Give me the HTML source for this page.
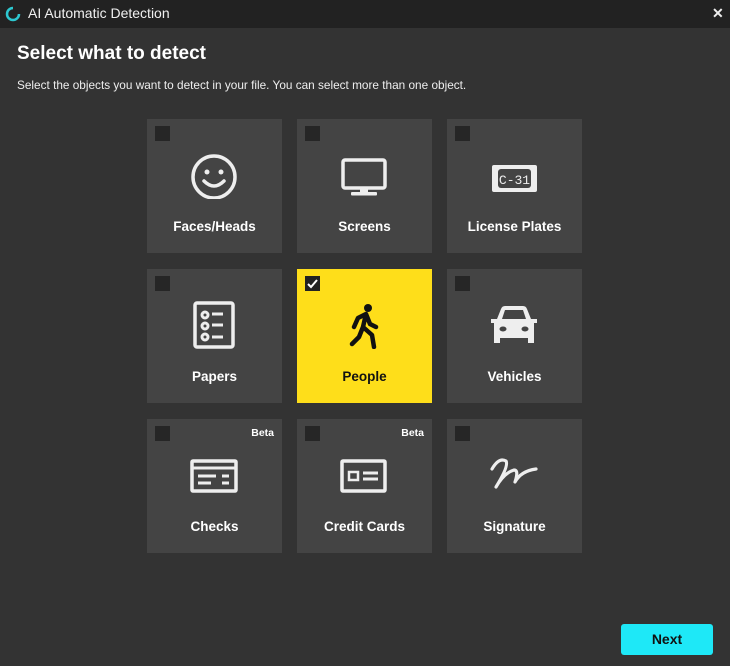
<!DOCTYPE html>
<html><head><style>
*{margin:0;padding:0;box-sizing:border-box}
body{width:730px;height:666px;background:#333333;font-family:"Liberation Sans",sans-serif;position:relative;overflow:hidden;color:#fff}
.bar{position:absolute;left:0;top:0;width:730px;height:28px;background:#222222}
.bar .t{position:absolute;left:28px;top:5px;font-size:14px;color:#f0f0f0}
.bar .x{position:absolute;left:712px;top:5px;font-size:14px;font-weight:bold;color:#eee}
h1{position:absolute;left:17px;top:43px;font-size:19px;font-weight:bold}
.sub{position:absolute;left:17px;top:78px;font-size:11.8px;color:#eee}
.tile{position:absolute;width:135px;height:134px;background:#444444}
.tile.sel{background:#fede1a;color:#111}
.cb{position:absolute;left:8px;top:7px;width:15px;height:15px;background:#262626}
.lbl{position:absolute;left:0;right:0;top:100px;text-align:center;font-size:13.5px;font-weight:bold}
.beta{position:absolute;right:8px;top:8px;font-size:10.5px;font-weight:bold}
.ic{position:absolute;left:42px;top:30px;width:50px;height:50px}
.next{position:absolute;left:621px;top:624px;width:92px;height:31px;background:#1ee8f7;border-radius:3px;color:#111;font-weight:bold;font-size:14px;text-align:center;line-height:31px}
</style></head><body>
<div class="bar">
<svg style="position:absolute;left:4px;top:5px" width="18" height="18" viewBox="0 0 18 18"><path d="M9 3 A6 6 0 1 0 15 9" fill="none" stroke="#2ec8d0" stroke-width="2.5"/><path d="M9 15 A6 6 0 0 0 9 3" fill="none" stroke="#2ec8d0" stroke-width="2" transform="rotate(180 9 9)" opacity="0.9"/></svg>
<div class="t">AI Automatic Detection</div><div class="x">✕</div></div>
<h1>Select what to detect</h1>
<div class="sub">Select the objects you want to detect in your file. You can select more than one object.</div>

<div class="tile" style="left:147px;top:119px"><div class="cb"></div>
<svg class="ic" viewBox="0 0 50 50"><circle cx="25" cy="28" r="21" fill="none" stroke="#eee" stroke-width="3.5"/><circle cx="18" cy="23" r="2.5" fill="#eee"/><circle cx="32" cy="23" r="2.5" fill="#eee"/><path d="M15 32 Q25 42 35 32" fill="none" stroke="#eee" stroke-width="3.5" stroke-linecap="round"/></svg>
<div class="lbl">Faces/Heads</div></div>

<div class="tile" style="left:297px;top:119px"><div class="cb"></div>
<svg class="ic" viewBox="0 0 50 50"><rect x="4" y="11" width="42" height="28" rx="2" fill="none" stroke="#eee" stroke-width="3.5"/><rect x="21" y="39" width="8" height="5" fill="#eee"/><rect x="12" y="43" width="26" height="3.5" rx="1" fill="#eee"/></svg>
<div class="lbl">Screens</div></div>

<div class="tile" style="left:447px;top:119px"><div class="cb"></div>
<svg class="ic" viewBox="0 0 50 50"><rect x="3" y="16" width="45" height="27" rx="2" fill="#eee"/><rect x="9" y="20" width="33" height="19" rx="3" fill="#444"/><text x="25.5" y="35" font-family="Liberation Mono,monospace" font-size="13" fill="#eee" text-anchor="middle">C-31</text></svg>
<div class="lbl">License Plates</div></div>

<div class="tile" style="left:147px;top:269px"><div class="cb"></div>
<svg class="ic" viewBox="0 0 50 50"><rect x="6" y="4" width="38" height="44" rx="2" fill="none" stroke="#eee" stroke-width="3.5"/><g fill="none" stroke="#eee" stroke-width="3"><circle cx="16" cy="16" r="3"/><circle cx="16" cy="27" r="3"/><circle cx="16" cy="38" r="3"/><path d="M23 15H34M23 26H34M23 38H34"/></g></svg>
<div class="lbl">Papers</div></div>

<div class="tile sel" style="left:297px;top:269px"><div class="cb" style="background:#222"><svg width="15" height="15" viewBox="0 0 15 15"><path d="M3 8l3 3 6-7" fill="none" stroke="#fff" stroke-width="2"/></svg></div>
<svg class="ic" viewBox="0 0 50 50"><circle cx="29" cy="9" r="4" fill="#111"/><path d="M27 15 L19 19 L15 28 M27 15 L24 28 L33 36 L35 48 M27 15 L31 25 L37 28 M24 28 L20 38 L13 45" fill="none" stroke="#111" stroke-width="4.5" stroke-linecap="round" stroke-linejoin="round"/></svg>
<div class="lbl">People</div></div>

<div class="tile" style="left:447px;top:269px"><div class="cb"></div>
<svg class="ic" viewBox="0 0 50 50"><path d="M2 20h6l4-10q1-3 4-3h18q3 0 4 3l4 10h6v4h-3v20h-6v-5H11v5H5V24H2z" fill="#eee"/><path d="M13 20l3-9h18l3 9z" fill="#444"/><ellipse cx="14" cy="30" rx="3.5" ry="2.5" fill="#444"/><ellipse cx="36" cy="30" rx="3.5" ry="2.5" fill="#444"/></svg>
<div class="lbl">Vehicles</div></div>

<div class="tile" style="left:147px;top:419px"><div class="cb"></div><div class="beta">Beta</div>
<svg class="ic" viewBox="0 0 50 50"><rect x="3" y="12" width="44" height="30" rx="1" fill="none" stroke="#eee" stroke-width="3.5"/><path d="M3 19H47" stroke="#eee" stroke-width="3"/><path d="M9 27H27M9 34H22M33 27H40M33 34H40" stroke="#eee" stroke-width="3"/></svg>
<div class="lbl">Checks</div></div>

<div class="tile" style="left:297px;top:419px"><div class="cb"></div><div class="beta">Beta</div>
<svg class="ic" viewBox="0 0 50 50"><rect x="3" y="12" width="43" height="30" rx="1" fill="none" stroke="#eee" stroke-width="3.5"/><rect x="10" y="23" width="9" height="8" fill="none" stroke="#eee" stroke-width="2.5"/><path d="M24 24H39M24 30H39" stroke="#eee" stroke-width="3"/></svg>
<div class="lbl">Credit Cards</div></div>

<div class="tile" style="left:447px;top:419px"><div class="cb"></div>
<svg class="ic" viewBox="0 0 50 50"><path d="M3 20 Q10 8 17 12 Q20 17 7 38 Q15 24 25 21 Q30 21 26 33 Q32 22 47 20" fill="none" stroke="#eee" stroke-width="3.2" stroke-linecap="round" stroke-linejoin="round"/></svg>
<div class="lbl">Signature</div></div>

<div class="next">Next</div>
</body></html>
